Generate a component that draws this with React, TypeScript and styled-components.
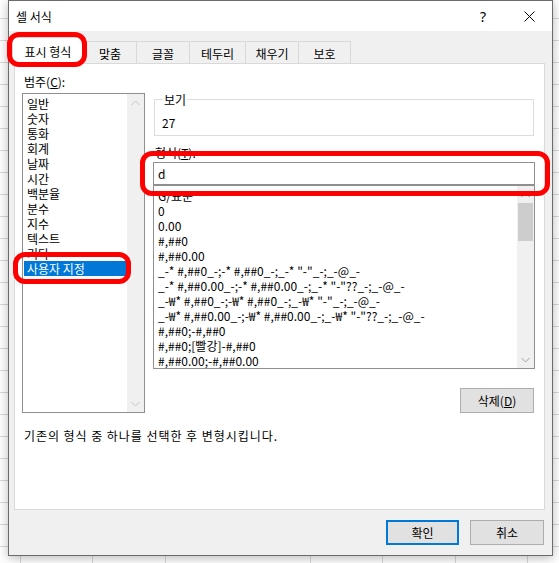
import React from 'react';
import styled, { createGlobalStyle } from 'styled-components';

const Global = createGlobalStyle`
  html, body { margin: 0; padding: 0; }
  body {
    width: 559px; height: 563px; overflow: hidden; background: #fff;
    font-family: "Noto Sans CJK KR", "Noto Sans", sans-serif;
    font-size: 12px; color: #000;
  }
  * { box-sizing: border-box; }
`;

const Desktop = styled.div`
  position: relative;
  width: 559px;
  height: 563px;
  padding-left: 8px;
  background-color: #fff;
  background-image:
    repeating-linear-gradient(to bottom, transparent 0 18px, #d8d8d8 18px 19px, transparent 19px 22px),
    repeating-linear-gradient(to right, transparent 0 20px, #d8d8d8 20px 21px, transparent 21px 72.5px);
`;

const Dialog = styled.div`
  width: 545px;
  height: 556px;
  border: 1px solid #6b6b6b;
  background: #f0f0f0;
  display: flex;
  flex-direction: column;
  box-shadow: 0 2px 10px rgba(0, 0, 0, 0.28);
`;

const TitleBar = styled.div`
  height: 30px;
  background: #fff;
  display: flex;
  align-items: center;
  padding-left: 7px;
`;

const Title = styled.span`
  font-size: 12px;
  flex: 1;
`;

const TitleButton = styled.div`
  width: 46px;
  height: 30px;
  display: flex;
  align-items: center;
  justify-content: center;
  font-size: 14px;
  font-family: "Segoe UI", "Noto Sans", sans-serif;
`;

const Body = styled.div`
  flex: 1;
  display: flex;
  flex-direction: column;
  padding: 6px 7px 0 5px;
`;

const TabRow = styled.div`
  display: flex;
  align-items: flex-end;
  height: 26px;
`;

const Tab = styled.div<{ $w: number; $active?: boolean }>`
  width: ${p => p.$w}px;
  height: ${p => (p.$active ? 27 : 22)}px;
  margin-left: ${p => (p.$active ? -2 : -1)}px;
  margin-bottom: ${p => (p.$active ? -1 : 0)}px;
  position: relative;
  z-index: ${p => (p.$active ? 2 : 1)};
  background: ${p => (p.$active ? '#fff' : '#f0f0f0')};
  border: 1px solid #d9d9d9;
  border-bottom: none;
  display: flex;
  align-items: center;
  justify-content: center;
  padding-top: ${p => (p.$active ? 0 : 1)}px;
  font-size: 12px;
  &:first-child { margin-left: -2px; }
`;

const Panel = styled.div`
  height: 447px;
  background: #fff;
  border: 1px solid #d9d9d9;
  padding: 10px 8px 0 7px;
  display: grid;
  grid-template-columns: 123px 382px;
  column-gap: 8px;
  grid-template-rows: auto auto;
  align-content: start;
`;

const Column = styled.div<{ $top?: number }>`
  display: flex;
  flex-direction: column;
  padding-top: ${p => p.$top ?? 0}px;
`;

const Label = styled.div<{ $mt?: number }>`
  line-height: 15px;
  font-size: 12px;
  padding-left: 2px;
  margin-top: ${p => p.$mt ?? 0}px;
  u { text-decoration: underline; text-underline-offset: 1px; }
`;

const ListBox = styled.div<{ $h: number; $mt?: number }>`
  height: ${p => p.$h}px;
  margin-top: ${p => p.$mt ?? 0}px;
  border: 1px solid #8f8f8f;
  background: #fff;
  display: flex;
  overflow: hidden;
`;

const Items = styled.div<{ $pl: number }>`
  flex: 1;
  padding-top: 2px;
  padding-left: ${p => p.$pl}px;
  display: flex;
  flex-direction: column;
  white-space: nowrap;
  overflow: hidden;
`;

const Item = styled.div<{ $sel?: boolean }>`
  height: 15px;
  line-height: 15px;
  font-size: 12px;
  padding-left: 3px;
  background: ${p => (p.$sel ? '#0078d7' : 'transparent')};
  color: ${p => (p.$sel ? '#fff' : '#000')};
`;

const ScrollBar = styled.div`
  width: 17px;
  background: #f0f0f0;
  display: flex;
  flex-direction: column;
  align-items: center;
`;

const ArrowCell = styled.div`
  width: 17px;
  height: 17px;
  display: flex;
  align-items: center;
  justify-content: center;
`;

const Track = styled.div`
  flex: 1;
  width: 100%;
  padding: 0 1px;
`;

const Thumb = styled.div`
  height: 38px;
  background: #cdcdcd;
`;

const Group = styled.fieldset`
  margin: 0 1px;
  padding: 8px 6px 4px 6px;
  border: 1px solid #dcdcdc;
  height: 44px;
`;

const Legend = styled.legend`
  padding: 0 1px;
  margin-left: 2px;
  line-height: 15px;
  font-size: 12px;
`;

const Value = styled.div`
  line-height: 15px;
  padding-left: 1px;
`;

const TextBox = styled.div`
  height: 23px;
  margin-top: 2px;
  border: 1px solid #8f8f8f;
  background: #fff;
  display: flex;
  align-items: center;
  padding-left: 4px;
  line-height: 15px;
`;

const ButtonRow = styled.div<{ $pt: number; $pr?: number }>`
  display: flex;
  justify-content: flex-end;
  gap: 11px;
  padding-top: ${p => p.$pt}px;
  padding-right: ${p => p.$pr ?? 0}px;
`;

const Button = styled.div<{ $default?: boolean }>`
  width: ${p => (p.$default ? 73 : 74)}px;
  height: 25px;
  background: #e1e1e1;
  border: ${p => (p.$default ? '2px solid #0078d7' : '1px solid #adadad')};
  display: flex;
  align-items: center;
  justify-content: center;
  font-size: 12px;
  u { text-decoration: underline; text-underline-offset: 1px; }
`;

const Description = styled.div`
  grid-column: 1 / span 2;
  margin-top: 15px;
  padding-left: 2px;
  line-height: 15px;
  letter-spacing: 0.95px;
`;

const Annotation = styled.div<{ $x: number; $y: number; $w: number; $h: number }>`
  position: absolute;
  left: ${p => p.$x}px;
  top: ${p => p.$y}px;
  width: ${p => p.$w}px;
  height: ${p => p.$h}px;
  border: 5px solid #ff0000;
  border-radius: 12px;
  z-index: 10;
  pointer-events: none;
`;

const Chevron = ({ up, color }: { up?: boolean; color: string }) => (
  <svg width="9" height="6" viewBox="0 0 9 6">
    <path
      d={up ? 'M0.5 5 L4.5 1 L8.5 5' : 'M0.5 1 L4.5 5 L8.5 1'}
      fill="none"
      stroke={color}
      strokeWidth="1"
    />
  </svg>
);

const CloseIcon = () => (
  <svg width="11" height="11" viewBox="0 0 11 11">
    <path d="M0.5 0.5 L10.5 10.5 M10.5 0.5 L0.5 10.5" stroke="#000" strokeWidth="1" />
  </svg>
);

const categories = ['일반', '숫자', '통화', '회계', '날짜', '시간', '백분율', '분수', '지수', '텍스트', '기타', '사용자 지정'];

const formats = [
  'G/표준',
  '0',
  '0.00',
  '#,##0',
  '#,##0.00',
  '_-* #,##0_-;-* #,##0_-;_-* "-"_-;_-@_-',
  '_-* #,##0.00_-;-* #,##0.00_-;_-* "-"??_-;_-@_-',
  '_-₩* #,##0_-;-₩* #,##0_-;_-₩* "-"_-;_-@_-',
  '_-₩* #,##0.00_-;-₩* #,##0.00_-;_-₩* "-"??_-;_-@_-',
  '#,##0;-#,##0',
  '#,##0;[빨강]-#,##0',
  '#,##0.00;-#,##0.00',
];

const tabs: { label: string; w: number }[] = [
  { label: '표시 형식', w: 72 },
  { label: '맞춤', w: 54 },
  { label: '글꼴', w: 54 },
  { label: '테두리', w: 57 },
  { label: '채우기', w: 54 },
  { label: '보호', w: 53 },
];

export default function App() {
  return (
    <>
      <Global />
      <Desktop>
        <Dialog>
          <TitleBar>
            <Title>셀 서식</Title>
            <TitleButton>?</TitleButton>
            <TitleButton>
              <CloseIcon />
            </TitleButton>
          </TitleBar>
          <Body>
            <TabRow>
              {tabs.map((t, i) => (
                <Tab key={t.label} $w={t.w} $active={i === 0}>
                  {t.label}
                </Tab>
              ))}
            </TabRow>
            <Panel>
              <Column>
                <Label>
                  범주(<u>C</u>):
                </Label>
                <ListBox $h={320} $mt={4}>
                  <Items $pl={1}>
                    {categories.map((c, i) => (
                      <Item key={c} $sel={i === categories.length - 1}>
                        {c}
                      </Item>
                    ))}
                  </Items>
                  <ScrollBar>
                    <ArrowCell>
                      <Chevron up color="#c2c2c2" />
                    </ArrowCell>
                    <Track />
                    <ArrowCell>
                      <Chevron color="#c2c2c2" />
                    </ArrowCell>
                  </ScrollBar>
                </ListBox>
              </Column>
              <Column $top={18}>
                <Group>
                  <Legend>보기</Legend>
                  <Value>27</Value>
                </Group>
                <Label $mt={9}>
                  형식(<u>T</u>):
                </Label>
                <TextBox>d</TextBox>
                <ListBox $h={184}>
                  <Items $pl={1}>
                    {formats.map(f => (
                      <Item key={f}>{f}</Item>
                    ))}
                  </Items>
                  <ScrollBar>
                    <ArrowCell>
                      <Chevron up color="#8a8a8a" />
                    </ArrowCell>
                    <Track>
                      <Thumb />
                    </Track>
                    <ArrowCell>
                      <Chevron color="#a0a0a0" />
                    </ArrowCell>
                  </ScrollBar>
                </ListBox>
                <ButtonRow $pt={19} $pr={1}>
                  <Button>
                    삭제(<u>D</u>)
                  </Button>
                </ButtonRow>
              </Column>
              <Description>기존의 형식 중 하나를 선택한 후 변형시킵니다.</Description>
            </Panel>
            <ButtonRow $pt={10} $pr={1}>
              <Button $default>확인</Button>
              <Button>취소</Button>
            </ButtonRow>
          </Body>
        </Dialog>
        <Annotation $x={7} $y={32} $w={80} $h={35} />
        <Annotation $x={13} $y={252} $w={118} $h={32} />
        <Annotation $x={140} $y={151} $w={410} $h={45} />
      </Desktop>
    </>
  );
}
